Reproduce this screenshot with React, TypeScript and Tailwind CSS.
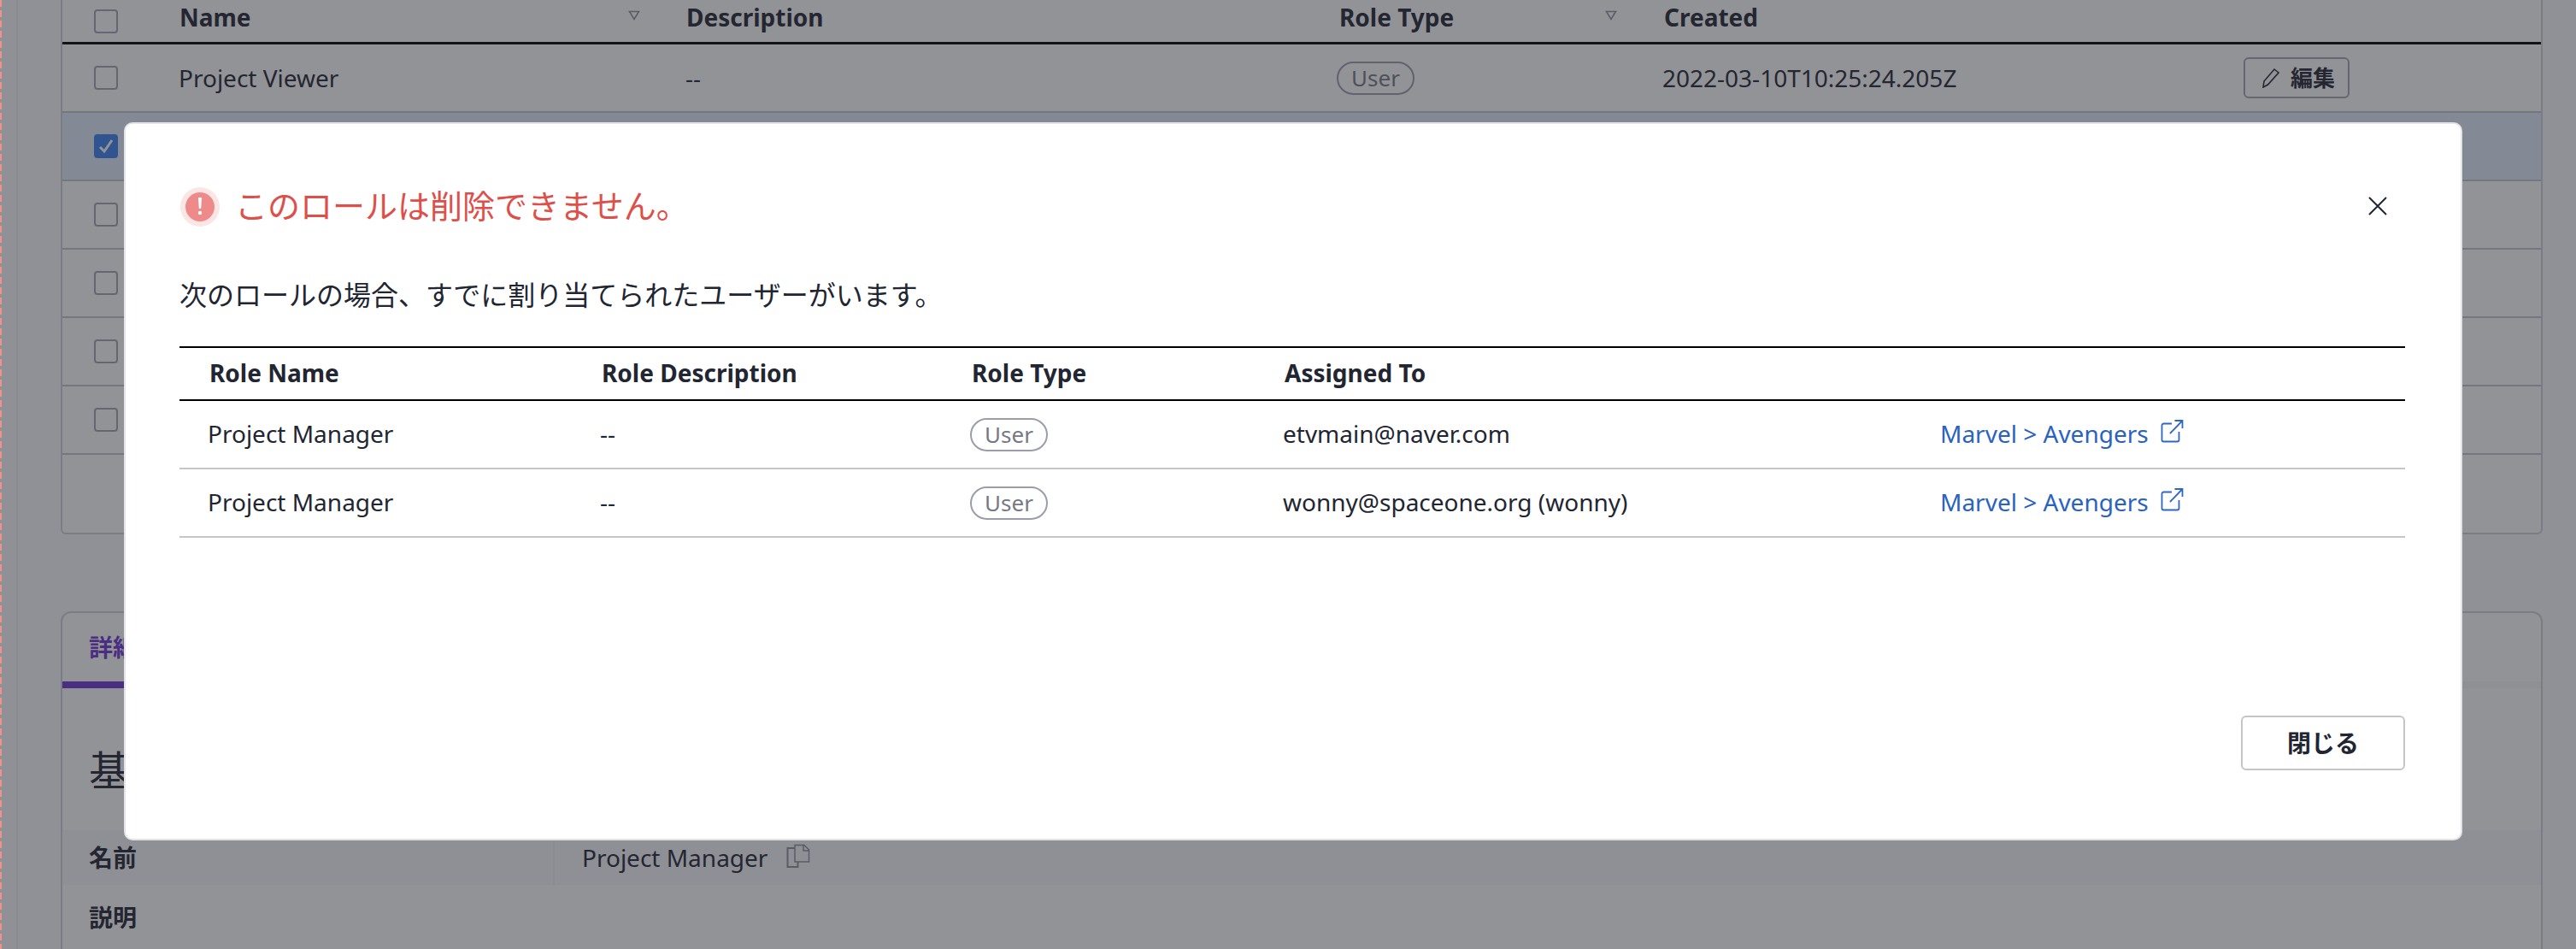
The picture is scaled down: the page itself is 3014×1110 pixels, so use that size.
import React from "react";

const font = { fontFamily: '"Noto Sans", "Noto Sans CJK JP", sans-serif' };

function Check({ checked = false }: { checked?: boolean }) {
  return (
    <span
      className={
        checked
          ? "flex h-[28px] w-[28px] items-center justify-center rounded-[4px] bg-[#3a80f0]"
          : "block h-[28px] w-[28px] rounded-[4px] border-2 border-[#a3a4b2] bg-white"
      }
    >
      {checked && (
        <svg width="22" height="22" viewBox="0 0 22 22" fill="none">
          <path d="M4 12l5 5L18 4" stroke="#ffffff" strokeWidth="3" />
        </svg>
      )}
    </span>
  );
}

function Sort() {
  return (
    <svg width="14" height="12" viewBox="0 0 14 12" fill="none" className="absolute right-[53px] top-[12px]">
      <path d="M1.5 1.5h11L7 10.5z" stroke="#8f909c" strokeWidth="1.6" />
    </svg>
  );
}

function Badge() {
  return (
    <span className="inline-flex h-[39px] w-[91px] items-center justify-center rounded-full border-2 border-[#9c9dab] text-[26px] leading-none text-[#777885]">
      User
    </span>
  );
}

function External() {
  return (
    <svg width="27" height="27" viewBox="0 0 27 27" fill="none" className="ml-[14px] -mt-[4px]">
      <path d="M13 4.5H3.5a2 2 0 0 0-2 2V23.500a2 2 0 0 0 2 2H19.500a2 2 0 0 0 2-2V14" stroke="#2f66c4" strokeWidth="1.8" />
      <path d="M11 16L25 1.500M16.500 1h9v9" stroke="#2f66c4" strokeWidth="1.8" />
    </svg>
  );
}

const bgCols = "grid grid-cols-[136px_593px_762px_381px_680px_1fr] items-center";
const modalCols = "grid grid-cols-[492px_433px_366px_769px_1fr] items-center";

function BgRow({ selected = false, children }: { selected?: boolean; children?: React.ReactNode }) {
  return (
    <div className={`${bgCols} h-[80px] border-b-2 border-[#c5c6cc] ${selected ? "bg-[#e1ebfa]" : ""}`}>
      <div className="pl-[37px]">
        <Check checked={selected} />
      </div>
      {children}
    </div>
  );
}

function Row({ email }: { email: string }) {
  return (
    <div className={`${modalCols} h-[80px] border-b-2 border-[#c4c4ca] text-[28px] text-[#222532]`}>
      <div className="pb-[3px] pl-[33px]">Project Manager</div>
      <div className="pb-[3px]">--</div>
      <div className="flex">
        <Badge />
      </div>
      <div className="pb-[3px]">{email}</div>
      <a className="flex items-center pb-[3px] text-[#2b62c0]">
        Marvel &gt; Avengers
        <External />
      </a>
    </div>
  );
}

export default function App() {
  return (
    <div style={font} className="relative h-[1110px] w-[3014px] overflow-hidden bg-[#fbfbfc] text-[28px] text-[#222532]">
      <div className="flex">
        <div className="h-[1110px] w-[21px] shrink-0 border-r-2 border-[#f0f0f2]" />
        <main className="ml-[50px] w-[2904px]">
          <section className="h-[625px] rounded-b-[6px] border-x-2 border-b-2 border-[#d2d3d8] bg-white">
            <div className={`${bgCols} h-[52px] border-b-[3px] border-black font-bold`}>
              <div className="pl-[37px]">
                <Check />
              </div>
              <div className="relative h-full pl-[1px] leading-[41px]">
                Name
                <Sort />
              </div>
              <div className="h-full pl-[1px] leading-[41px]">Description</div>
              <div className="relative h-full pl-[3px] leading-[41px]">
                Role Type
                <Sort />
              </div>
              <div className="h-full pl-[2px] leading-[41px]">Created</div>
              <div />
            </div>
            <BgRow>
              <div>Project Viewer</div>
              <div>--</div>
              <div className="flex">
                <Badge />
              </div>
              <div>2022-03-10T10:25:24.205Z</div>
              <div className="flex">
                <button className="flex h-[48px] w-[124px] items-center justify-center gap-[11px] rounded-[6px] border-2 border-[#a3a4b2] pl-[3px] text-[26px] font-bold">
                  <svg width="24" height="24" viewBox="0 0 24 24" fill="none">
                    <path d="M3 23l1-7L16 2l5 4L8.500 20z" stroke="#222532" strokeWidth="1.600" />
                  </svg>
                  編集
                </button>
              </div>
            </BgRow>
            <BgRow selected />
            <BgRow />
            <BgRow />
            <BgRow />
            <BgRow />
          </section>
          <section className="mt-[90px] h-[400px] rounded-t-[12px] border-x-2 border-t-2 border-[#d2d3d8] bg-white">
            <div className="h-[80px] pl-[31px] pt-[20px] font-bold leading-[40px] text-[#6e34d2]">詳細</div>
            <div className="h-[8px] bg-[#f8f8f9]">
              <div className="h-full w-[300px] bg-[#6e34d2]" />
            </div>
            <h2 className="pl-[31px] pt-[72px] text-[48px] leading-[48px]">基本情報</h2>
            <div className="mt-[46px] flex h-[64px] items-center bg-[#f8f7fc]">
              <div className="w-[574px] pl-[31px] font-bold">名前</div>
              <div className="flex h-full items-center border-l-2 border-[#f0eff6] pl-[32px]">
                Project Manager
                <svg width="28" height="28" viewBox="0 0 28 28" fill="none" className="ml-[22px] -mt-[4px]">
                  <path d="M10 5H1.500v22h12V21" stroke="#8d8e9c" strokeWidth="2" />
                  <path d="M10 1.500h11l5.500 5.500v14H10zM20 1.500V8h6.500" stroke="#8d8e9c" strokeWidth="1.500" />
                </svg>
              </div>
            </div>
            <div className="flex h-[76px] items-center pl-[31px] font-bold">説明</div>
          </section>
        </main>
      </div>

      <div className="absolute inset-0 flex items-start justify-start bg-[rgba(37,39,47,0.5)] pl-[145px] pt-[143px]">
        <div className="flex h-[840px] w-[2736px] flex-col rounded-[10px] border-2 border-[#e4e4e8] bg-white pl-[63px] pr-[65px] pt-[71px]">
          <div className="relative flex h-[52px] items-center">
            <svg width="46" height="46" viewBox="0 0 46 46" className="ml-[1px]">
              <circle cx="23" cy="23" r="23" fill="#fbe5e5" />
              <circle cx="23" cy="23" r="17" fill="#ef8a8a" />
              <path d="M21 12h4l-.8 13h-2.400z" fill="#ffffff" />
              <circle cx="23" cy="30" r="2.200" fill="#ffffff" />
            </svg>
            <h1 className="ml-[18px] pb-[4px] text-[38px] leading-[52px] text-[#de4f4a]">このロールは削除できません。</h1>
            <svg width="24" height="24" viewBox="0 0 24 24" fill="none" className="absolute right-[20px] top-[13px]">
              <path d="M2 2l20 20M22 2L2 22" stroke="#222532" strokeWidth="2" />
            </svg>
          </div>
          <p className="mt-[53px] text-[32px] leading-[48px]">次のロールの場合、すでに割り当てられたユーザーがいます。</p>
          <div className="mt-[36px]">
            <div className={`${modalCols} h-[64px] border-y-2 border-black pb-[2px] font-bold`}>
              <div className="pl-[35px]">Role Name</div>
              <div className="pl-[2px]">Role Description</div>
              <div className="pl-[2px]">Role Type</div>
              <div className="pl-[2px]">Assigned To</div>
              <div />
            </div>
            <Row email="etvmain@naver.com" />
            <Row email="wonny@spaceone.org (wonny)" />
          </div>
          <div className="mt-auto flex justify-end pb-[80px]">
            <button className="h-[64px] w-[192px] rounded-[6px] border-2 border-[#c4c4ca] text-[28px] font-bold">閉じる</button>
          </div>
        </div>
      </div>
      <div className="absolute inset-y-0 left-0 w-[2px] bg-[repeating-linear-gradient(to_bottom,#f0918a_0,#f0918a_8px,transparent_8px,transparent_12px)]" />
    </div>
  );
}
